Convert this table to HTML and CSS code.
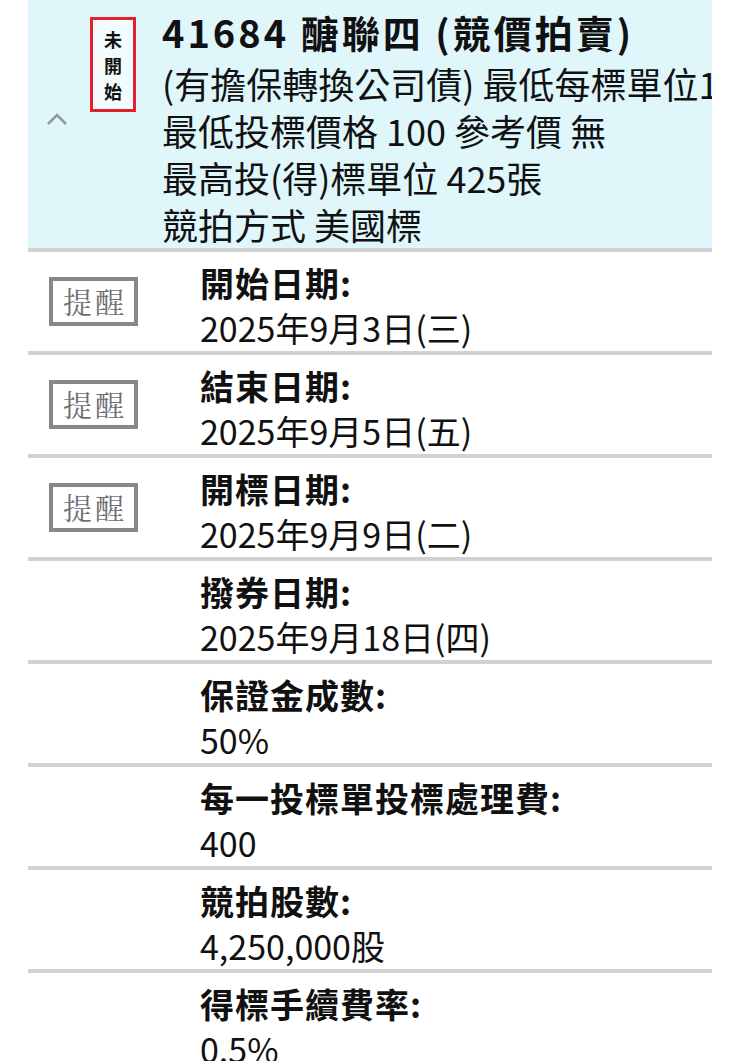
FILE: index.html
```html
<!DOCTYPE html>
<html lang="zh-Hant">
<head>
<meta charset="utf-8">
<link rel="stylesheet" href="styles.css">
</head>
<body>
<div class="page">
  <section class="header">
    <div class="side">
      <svg class="chevron" width="22" height="14" viewBox="0 0 22 14"><path d="M2 12 L11 3 L20 12" fill="none" stroke="#8e9c9c" stroke-width="2.6"/></svg>
      <div class="badge"><span>未</span><span>開</span><span>始</span></div>
    </div>
    <div class="info">
      <div class="title">41684 醣聯四 (競價拍賣)</div>
      <div class="line">(有擔保轉換公司債) 最低每標單位1</div>
      <div class="line">最低投標價格 100 參考價 無</div>
      <div class="line">最高投(得)標單位 425張</div>
      <div class="line">競拍方式 美國標</div>
    </div>
  </section>
  <div class="row">
    <div class="cell"><span class="remind">提醒</span></div>
    <div class="data"><div class="label">開始日期:</div><div class="value">2025年9月3日(三)</div></div>
  </div>
  <div class="row">
    <div class="cell"><span class="remind">提醒</span></div>
    <div class="data"><div class="label">結束日期:</div><div class="value">2025年9月5日(五)</div></div>
  </div>
  <div class="row">
    <div class="cell"><span class="remind">提醒</span></div>
    <div class="data"><div class="label">開標日期:</div><div class="value">2025年9月9日(二)</div></div>
  </div>
  <div class="row">
    <div class="cell"></div>
    <div class="data"><div class="label">撥券日期:</div><div class="value">2025年9月18日(四)</div></div>
  </div>
  <div class="row">
    <div class="cell"></div>
    <div class="data"><div class="label">保證金成數:</div><div class="value">50%</div></div>
  </div>
  <div class="row">
    <div class="cell"></div>
    <div class="data"><div class="label">每一投標單投標處理費:</div><div class="value">400</div></div>
  </div>
  <div class="row">
    <div class="cell"></div>
    <div class="data"><div class="label">競拍股數:</div><div class="value">4,250,000股</div></div>
  </div>
  <div class="row">
    <div class="cell"></div>
    <div class="data"><div class="label">得標手續費率:</div><div class="value">0.5%</div></div>
  </div>
</div>
</body>
</html>
```
FILE: styles.css
```css
html, body {
  margin: 0;
  padding: 0;
  background: #ffffff;
}
body {
  font-family: "Noto Sans CJK TC", "Noto Sans", sans-serif;
  color: #111111;
  overflow: hidden;
}
.page {
  margin-left: 28px;
  width: 684px;
}
.header {
  display: flex;
  background: #dff6fb;
  border-bottom: 4px solid #d2d2d2;
  height: 248px;
}
.side {
  width: 134px;
  flex: none;
  display: flex;
  align-items: flex-start;
  padding-top: 17px;
  box-sizing: border-box;
}
.chevron {
  margin-left: 18px;
  margin-top: 95px;
}
.badge {
  margin-left: 22px;
  width: 46px;
  height: 95px;
  box-sizing: border-box;
  border: 3px solid #e3202c;
  background: #f2fbfd;
  display: flex;
  flex-direction: column;
  align-items: center;
  justify-content: center;
  font-size: 18px;
  line-height: 26px;
  font-weight: 700;
}
.info {
  flex: 1;
  min-width: 0;
  padding-top: 4px;
  white-space: nowrap;
  overflow-x: clip;
  overflow-y: visible;
}
.title {
  font-size: 38px;
  font-weight: 700;
  letter-spacing: 3px;
  line-height: 56px;
}
.line {
  font-size: 36px;
  line-height: 47px;
}
.row {
  display: flex;
  border-bottom: 4px solid #d2d2d2;
  height: 99px;
}
.cell {
  width: 172px;
  flex: none;
  display: flex;
  align-items: center;
}
.remind {
  margin-left: 21px;
  width: 89px;
  height: 49px;
  box-sizing: border-box;
  border: 4px solid #888888;
  display: flex;
  align-items: center;
  justify-content: center;
  font-family: "Noto Serif CJK TC", "Noto Serif CJK SC", "Noto Sans CJK TC", serif;
  font-size: 29px;
  letter-spacing: 3px;
  color: #6e6e76;
  padding-left: 3px;
}
.data {
  padding-top: 8px;
  white-space: nowrap;
}
.label {
  font-size: 34px;
  font-weight: 700;
  letter-spacing: 1px;
  line-height: 45px;
}
.value {
  font-size: 34px;
  line-height: 45px;
}
```
